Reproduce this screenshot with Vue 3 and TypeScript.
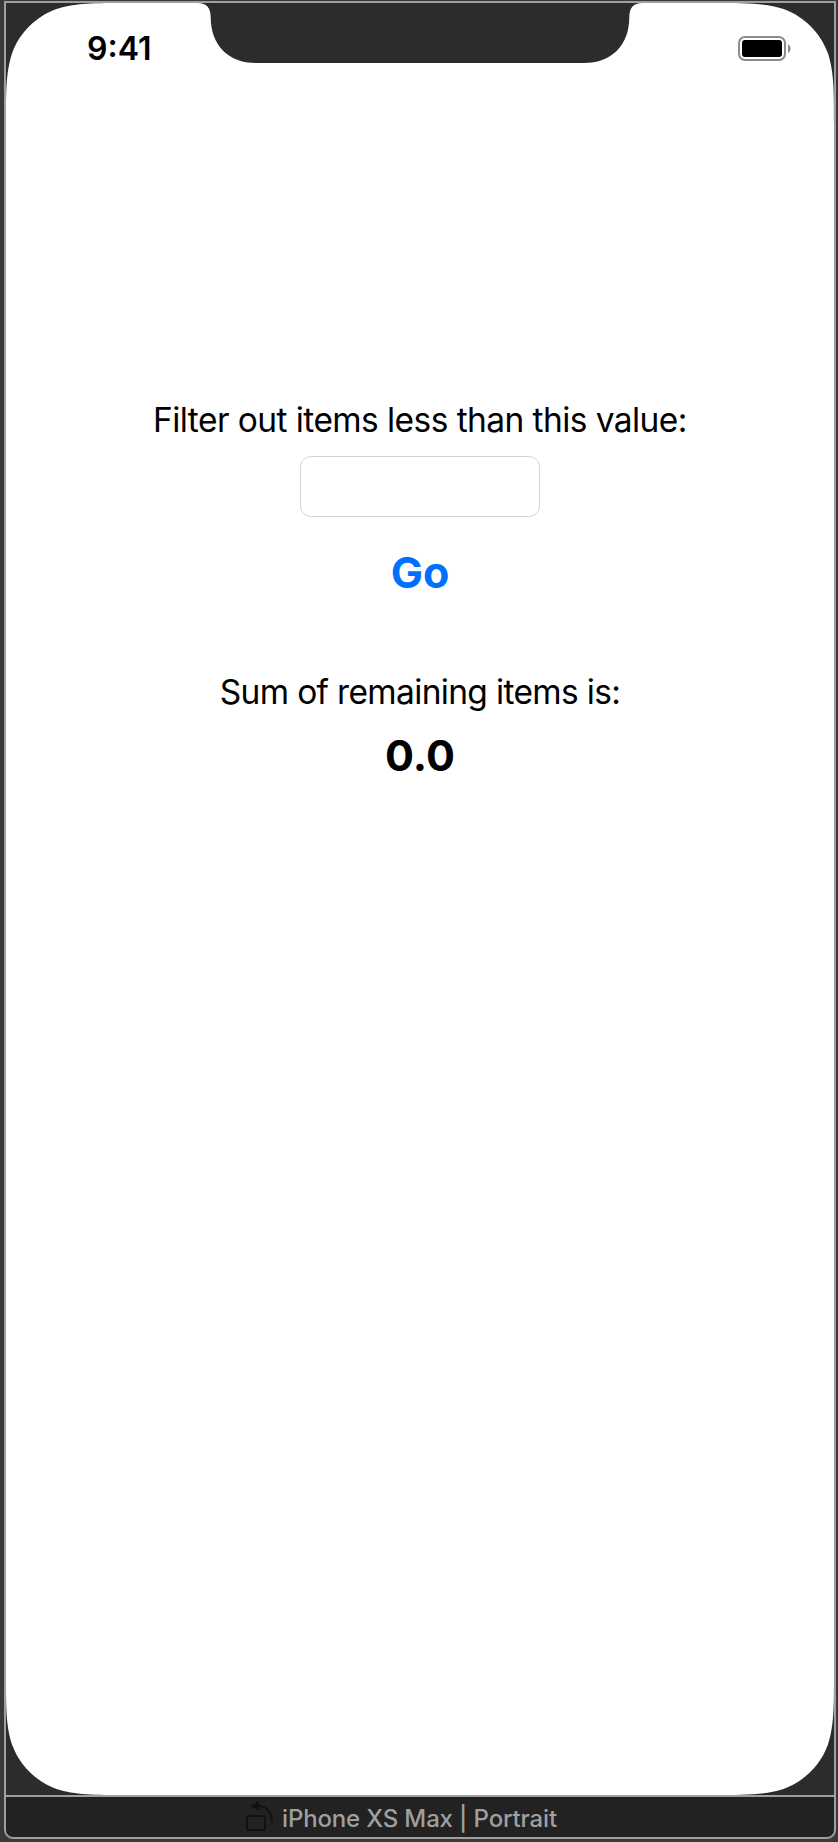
<script setup lang="ts">
import { ref } from 'vue'

const items: number[] = []
const threshold = ref('')
const sum = ref(0)

function go(): void {
  const limit = Number(threshold.value) || 0
  sum.value = items.filter((n) => n >= limit).reduce((a, b) => a + b, 0)
}
</script>

<template>
  <div class="canvas">
    <div class="device">
      <main class="screen">
        <svg class="bezel" width="828" height="1792" viewBox="0 0 828 1792" aria-hidden="true">
          <defs>
            <path id="corner" d="M0 0H122.3C87.1 0 69.5 0 50.5 6C29.8 13.5 13.5 29.8 6 50.5C0 69.5 0 87.1 0 122.3Z" />
          </defs>
          <use href="#corner" />
          <use href="#corner" transform="translate(828 0) scale(-1 1)" />
          <use href="#corner" transform="translate(0 1792) scale(1 -1)" />
          <use href="#corner" transform="translate(828 1792) scale(-1 -1)" />
          <path d="M192 0C200.5 0.4 204.5 4.5 204.7 14C204.7 42 222 60 250 60H578C606 60 623.3 42 623.3 14C623.5 4.5 627.5 0.4 636 0Z" />
        </svg>
        <header class="status">
          <span class="time">9:41</span>
          <svg class="battery" width="54" height="26" viewBox="0 0 54 26" aria-hidden="true">
            <rect x="1" y="1" width="46" height="23" rx="6" fill="none" stroke="#8c8c8c" stroke-width="2" />
            <rect x="4" y="4" width="40" height="17" rx="3" fill="#000" />
            <path d="M50 8.2C53.4 9.5 53.4 15.6 50 16.9Z" fill="#8c8c8c" />
          </svg>
        </header>
        <section class="content">
          <label class="label filter" for="threshold">Filter out items less than this value:</label>
          <input id="threshold" v-model="threshold" class="field" type="text" inputmode="decimal" />
          <button class="go" type="button" @click="go">Go</button>
          <p class="label sum">Sum of remaining items is:</p>
          <output class="result">{{ sum.toFixed(1) }}</output>
        </section>
      </main>
      <footer class="caption">
        <svg class="rotate" width="30" height="32" viewBox="0 0 30 32" aria-hidden="true">
          <rect x="2" y="15" width="18" height="14" rx="1" fill="none" stroke="#111" stroke-width="2" />
          <path d="M12 5C21 4.500 27 11 27 22" fill="none" stroke="#111" stroke-width="2" />
          <path d="M5.500 5L14 0V10Z" fill="#111" />
        </svg>
        <span class="name">iPhone XS Max | Portrait</span>
      </footer>
    </div>
  </div>
</template>

<style>
body {
  margin: 0;
  background: #3a3839;
}
</style>

<style scoped>
.canvas {
  box-sizing: border-box;
  width: 838px;
  height: 1842px;
  padding: 1px 2px 3px 4px;
  background: #3a3839;
  font-family: Inter, "Liberation Sans", sans-serif;
  color: #000;
}
.device {
  box-sizing: border-box;
  width: 832px;
  height: 1838px;
  border: 2px solid #a09e9f;
  border-radius: 0 0 9px 9px;
  overflow: hidden;
  background: #222;
}
.screen {
  position: relative;
  height: 1792px;
  background: #fff;
}
.bezel {
  position: absolute;
  inset: 0;
  fill: #2c2c2c;
  pointer-events: none;
}
.status {
  box-sizing: border-box;
  display: flex;
  justify-content: space-between;
  align-items: flex-start;
  height: 397px;
  padding: 26px 42px 0 81px;
}
.time {
  font-size: 32px;
  font-weight: 600;
  line-height: 40px;
}
.battery {
  margin-top: 7px;
}
.content {
  display: flex;
  flex-direction: column;
  align-items: center;
}
.label {
  margin: 0;
  font-size: 33.5px;
  line-height: 40px;
  letter-spacing: -0.57px;
  white-space: nowrap;
}
.field {
  box-sizing: border-box;
  width: 240px;
  height: 61px;
  margin: 16px 0 0;
  padding: 0 14px;
  border: 1px solid #d2d2d2;
  border-radius: 11px;
  outline: none;
  background: #fff;
  font: inherit;
  font-size: 28px;
}
.go {
  margin: 29px 0 0;
  padding: 0;
  border: 0;
  background: none;
  color: #0070ff;
  font: inherit;
  font-size: 43px;
  font-weight: 700;
  line-height: 52px;
}
.sum {
  margin-top: 74px;
  letter-spacing: -0.66px;
}
.result {
  margin-top: 17px;
  font-size: 43px;
  font-weight: 700;
  line-height: 52px;
}
.caption {
  display: flex;
  align-items: center;
  gap: 7px;
  box-sizing: border-box;
  height: 42px;
  padding-left: 239px;
  border-top: 2px solid #a09e9f;
  color: #9f9f9f;
}
.name {
  margin-top: 4px;
  font-size: 24px;
  font-weight: 500;
  line-height: 36px;
  letter-spacing: -0.14px;
  white-space: nowrap;
}
</style>
